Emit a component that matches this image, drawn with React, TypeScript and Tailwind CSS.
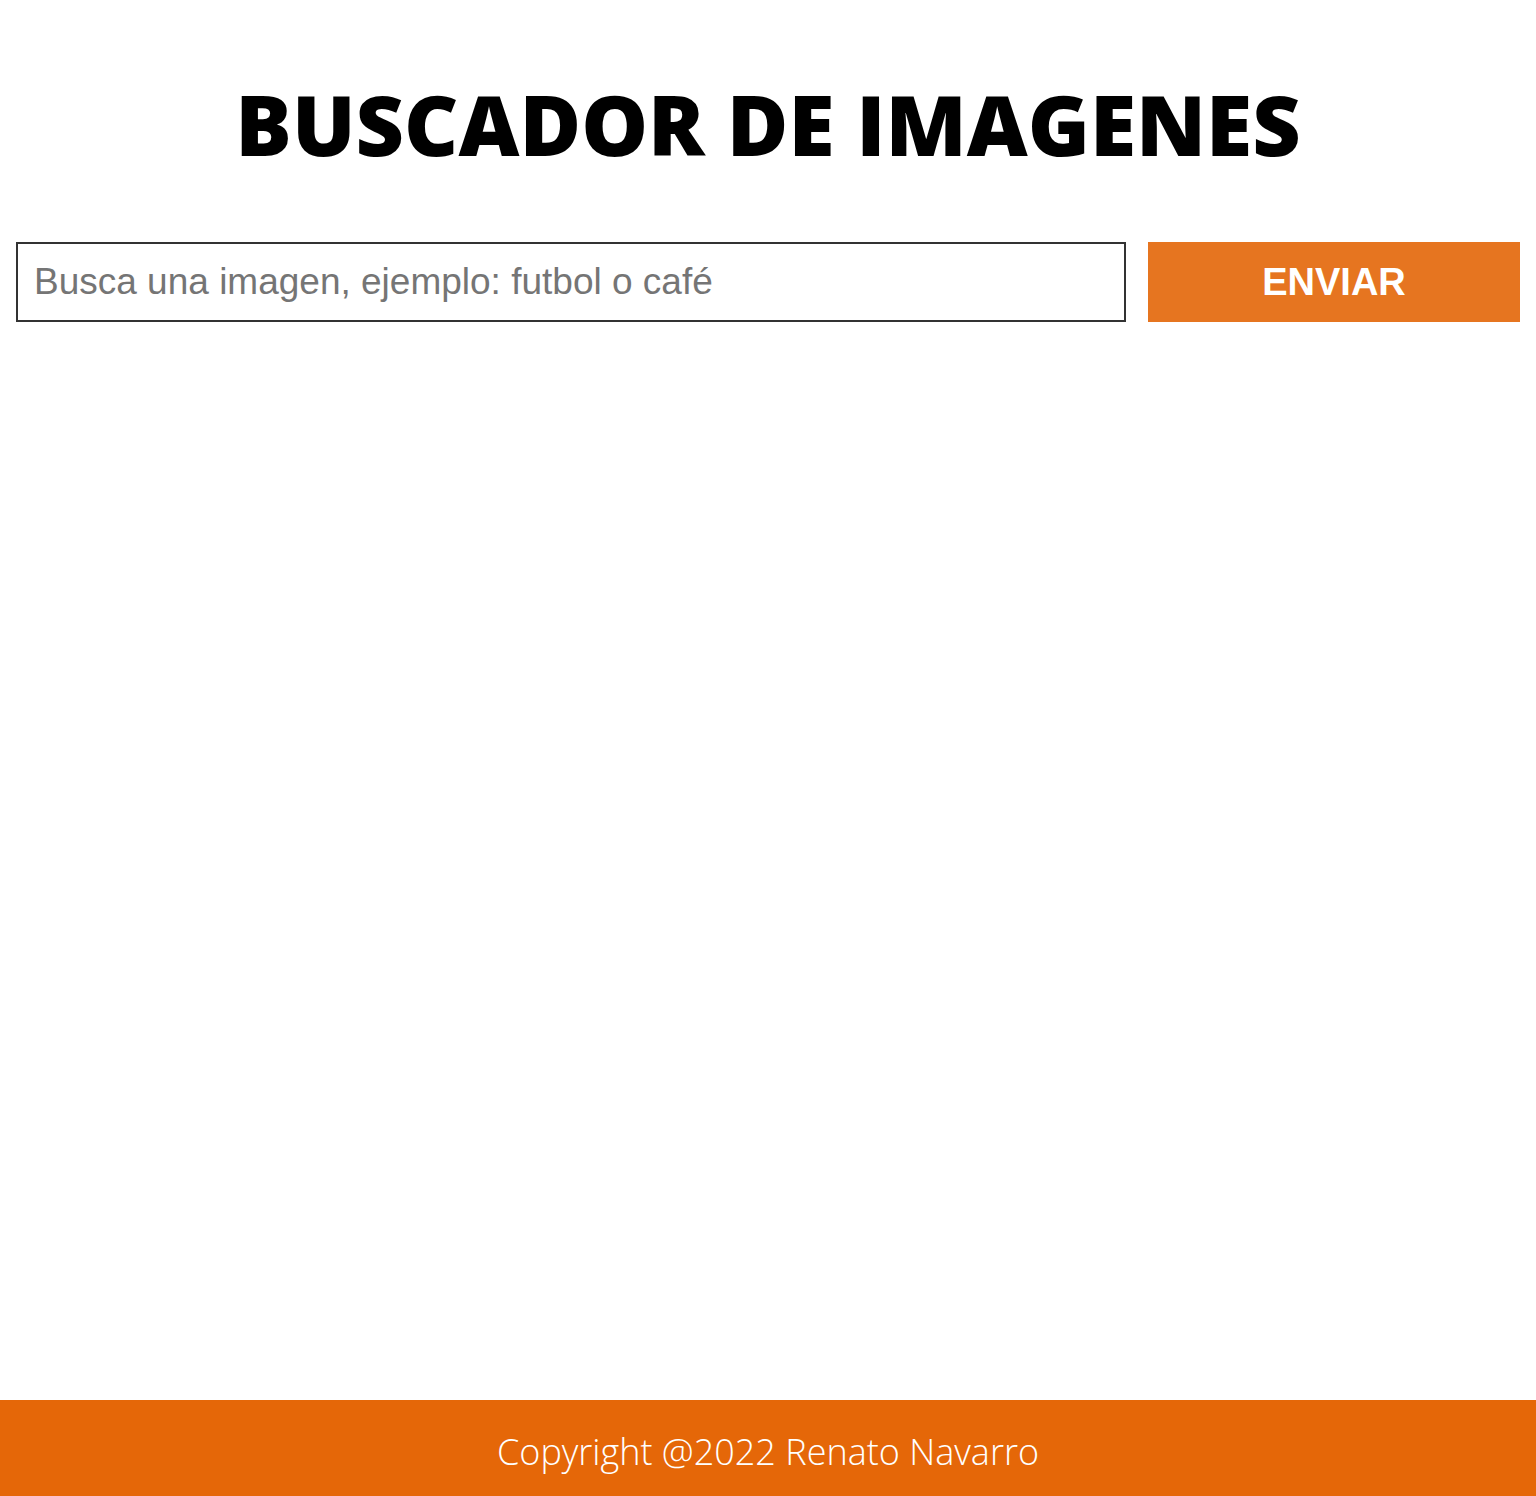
export default function App() {
  return (
    <div className="min-h-screen flex flex-col bg-white">
      <main className="flex-1 px-4">
        <h1
          className="text-center font-extrabold text-black text-[84px] leading-none pt-[82px] pb-[76px]"
          style={{ fontFamily: '"Open Sans", "Noto Sans", sans-serif' }}
        >
          BUSCADOR DE IMAGENES
        </h1>

        <form
          className="flex gap-[22px]"
          onSubmit={(e) => e.preventDefault()}
          style={{ fontFamily: '"Liberation Sans", Arial, sans-serif' }}
        >
          <input
            type="text"
            placeholder="Busca una imagen, ejemplo: futbol o café"
            className="flex-1 h-[80px] border-2 border-[#333333] px-4 text-[37px] text-[#333] placeholder:text-[#757575] outline-none"
          />
          <button
            type="submit"
            className="w-[372px] h-[80px] bg-[#e67520] text-white font-bold text-[38px]"
          >
            ENVIAR
          </button>
        </form>
      </main>

      <footer
        className="h-[96px] bg-[#e56708] flex items-center justify-center pt-2 text-white text-[36px] font-light"
        style={{ fontFamily: '"Open Sans", "Noto Sans", sans-serif' }}
      >
        Copyright @2022 Renato Navarro
      </footer>
    </div>
  );
}
